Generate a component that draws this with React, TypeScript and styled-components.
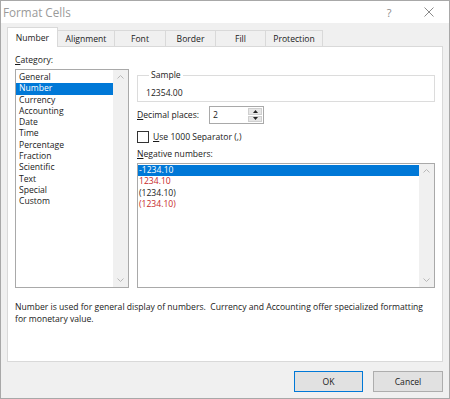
import React from "react";
import styled, { createGlobalStyle } from "styled-components";

const Global = createGlobalStyle`
  html, body { margin: 0; padding: 0; background: #f0f0f0; }
  body { font-family: "Open Sans", "Noto Sans", sans-serif; font-size: 8.6px; color: #1a1a1a; }
  * { box-sizing: border-box; }
`;

const Window = styled.div`
  width: 450px;
  height: 399px;
  border: 1px solid #a8a8a8;
  background: #f0f0f0;
  display: flex;
  flex-direction: column;
`;

const TitleBar = styled.div`
  height: 22px;
  background: #ffffff;
  display: flex;
  align-items: center;
  justify-content: space-between;
  padding-left: 2px;
`;

const Title = styled.div`
  font-size: 11.7px;
  color: #9a9a9a;
`;

const TitleButtons = styled.div`
  display: flex;
  align-items: center;
  height: 100%;
`;

const TitleButton = styled.div`
  width: 40px;
  height: 100%;
  display: flex;
  align-items: center;
  justify-content: center;
  color: #8a8a8a;
  font-size: 11px;
`;

const Body = styled.div`
  flex: 1;
  display: flex;
  flex-direction: column;
  padding: 5px 6px 0 6px;
`;

const TabRow = styled.div`
  display: flex;
  align-items: flex-end;
  height: 19px;
  position: relative;
  z-index: 1;
  margin-bottom: -1px;
`;

const Tab = styled.div<{ $active?: boolean; $w: number }>`
  width: ${(p) => p.$w}px;
  height: ${(p) => (p.$active ? 20 : 17)}px;
  display: flex;
  align-items: center;
  justify-content: center;
  background: ${(p) => (p.$active ? "#ffffff" : "#f0f0f0")};
  border: 1px solid #d9d9d9;
  border-bottom: ${(p) => (p.$active ? "none" : "1px solid #d9d9d9")};
  margin-left: ${(p) => (p.$active ? 0 : -1)}px;
  padding-top: ${(p) => (p.$active ? 1 : 1)}px;
  color: #1a1a1a;
  &:first-child { margin-left: 0; }
`;

const Panel = styled.div`
  height: 316px;
  background: #ffffff;
  border: 1px solid #d9d9d9;
  padding: 7px 6px 0 7px;
  display: flex;
  flex-direction: column;
`;

const Columns = styled.div`
  display: grid;
  grid-template-columns: 114px 298px;
  column-gap: 8px;
`;

const Column = styled.div`
  display: flex;
  flex-direction: column;
`;

const FieldLabel = styled.div<{ $mt?: number }>`
  line-height: 13px;
  height: 13px;
  margin-top: ${(p) => p.$mt ?? 0}px;
  margin-bottom: 2px;
  white-space: nowrap;
`;

const ListBox = styled.div<{ $h: number }>`
  height: ${(p) => p.$h}px;
  border: 1px solid #a9a9a9;
  display: flex;
  background: #fff;
`;

const ListItems = styled.div<{ $pt: number }>`
  flex: 1;
  padding-top: ${(p) => p.$pt}px;
`;

const ListItem = styled.div<{ $selected?: boolean; $red?: boolean; $tight?: boolean }>`
  height: 11.3px;
  line-height: 11.3px;
  padding-left: ${(p) => (p.$tight ? 1 : 3)}px;
  background: ${(p) => (p.$selected ? "#0078d7" : "transparent")};
  color: ${(p) => (p.$selected ? "#ffffff" : p.$red ? "#c62828" : "#1a1a1a")};
  white-space: nowrap;
`;

const ScrollBar = styled.div`
  width: 15px;
  background: #f0f0f0;
  display: flex;
  flex-direction: column;
  justify-content: space-between;
  align-items: center;
  padding: 5px 0 5px;
`;

const GroupBox = styled.fieldset`
  margin: 15px 0 0 0;
  padding: 6px 8px 2px 8px;
  border: 1px solid #dcdcdc;
  min-width: 0;
`;

const Legend = styled.legend`
  padding: 0 2px;
  margin-left: 3px;
  line-height: 12px;
  color: #1a1a1a;
`;

const SampleValue = styled.div`
  line-height: 12px;
`;

const Row = styled.div<{ $mt: number }>`
  display: flex;
  align-items: center;
  margin-top: ${(p) => p.$mt}px;
`;

const DecimalLabel = styled.div`
  width: 72px;
`;

const SpinBox = styled.div`
  width: 55px;
  height: 18px;
  border: 1px solid #a9a9a9;
  display: flex;
  background: #fff;
`;

const SpinValue = styled.div`
  flex: 1;
  padding-left: 3px;
  line-height: 16px;
`;

const SpinButtons = styled.div`
  width: 15px;
  display: flex;
  flex-direction: column;
  gap: 1px;
  padding: 1px 1px 1px 0;
`;

const SpinButton = styled.div`
  flex: 1;
  background: #e6e6e6;
  border: 1px solid #cfcfcf;
  display: flex;
  align-items: center;
  justify-content: center;
`;

const CheckBox = styled.div`
  width: 12px;
  height: 12px;
  border: 1px solid #333;
  background: #fff;
  margin-right: 4px;
`;

const Description = styled.div`
  margin-top: 14px;
  line-height: 11.5px;
  padding-right: 10px;
`;

const Footer = styled.div`
  display: flex;
  justify-content: flex-end;
  gap: 10px;
  margin-top: 9px;
`;

const Button = styled.div<{ $primary?: boolean }>`
  width: ${(p) => (p.$primary ? 69 : 70)}px;
  height: 21px;
  display: flex;
  align-items: center;
  justify-content: center;
  background: #e1e1e1;
  border: 1px solid ${(p) => (p.$primary ? "#0078d7" : "#adadad")};
`;

const Chevron = ({ up }: { up?: boolean }) => (
  <svg width="7" height="4" viewBox="0 0 7 4">
    <path
      d={up ? "M0.5 3.5 L3.5 0.5 L6.5 3.5" : "M0.5 0.5 L3.5 3.5 L6.5 0.5"}
      fill="none"
      stroke="#b8b8b8"
      strokeWidth="1"
    />
  </svg>
);

const Triangle = ({ up }: { up?: boolean }) => (
  <svg width="5" height="3" viewBox="0 0 5 3">
    <path d={up ? "M0 3 L2.5 0 L5 3 Z" : "M0 0 L2.5 3 L5 0 Z"} fill="#222" />
  </svg>
);

const tabs: [string, number][] = [
  ["Number", 51],
  ["Alignment", 58],
  ["Font", 52],
  ["Border", 51],
  ["Fill", 51],
  ["Protection", 58],
];

const categories = [
  "General",
  "Number",
  "Currency",
  "Accounting",
  "Date",
  "Time",
  "Percentage",
  "Fraction",
  "Scientific",
  "Text",
  "Special",
  "Custom",
];

const negatives: { text: string; red?: boolean }[] = [
  { text: "-1234.10" },
  { text: "1234.10", red: true },
  { text: "(1234.10)" },
  { text: "(1234.10)", red: true },
];

export default function App() {
  return (
    <>
      <Global />
      <Window>
        <TitleBar>
          <Title>Format Cells</Title>
          <TitleButtons>
            <TitleButton>?</TitleButton>
            <TitleButton>
              <svg width="10" height="10" viewBox="0 0 10 10">
                <path d="M0.5 0.5 L9.5 9.5 M9.5 0.5 L0.5 9.5" stroke="#8a8a8a" strokeWidth="1" />
              </svg>
            </TitleButton>
          </TitleButtons>
        </TitleBar>
        <Body>
          <TabRow>
            {tabs.map(([t, w], i) => (
              <Tab key={t} $w={w} $active={i === 0}>
                {t}
              </Tab>
            ))}
          </TabRow>
          <Panel>
            <Columns>
              <Column>
                <FieldLabel>
                  <u>C</u>ategory:
                </FieldLabel>
                <ListBox $h={219}>
                  <ListItems $pt={2}>
                    {categories.map((c) => (
                      <ListItem key={c} $selected={c === "Number"}>
                        {c}
                      </ListItem>
                    ))}
                  </ListItems>
                  <ScrollBar>
                    <Chevron up />
                    <Chevron />
                  </ScrollBar>
                </ListBox>
              </Column>
              <Column>
                <GroupBox>
                  <Legend>Sample</Legend>
                  <SampleValue>12354.00</SampleValue>
                </GroupBox>
                <Row $mt={4}>
                  <DecimalLabel>
                    <u>D</u>ecimal places:
                  </DecimalLabel>
                  <SpinBox>
                    <SpinValue>2</SpinValue>
                    <SpinButtons>
                      <SpinButton>
                        <Triangle up />
                      </SpinButton>
                      <SpinButton>
                        <Triangle />
                      </SpinButton>
                    </SpinButtons>
                  </SpinBox>
                </Row>
                <Row $mt={7}>
                  <CheckBox />
                  <span>
                    <u>U</u>se 1000 Separator (,)
                  </span>
                </Row>
                <FieldLabel $mt={5}>
                  <u>N</u>egative numbers:
                </FieldLabel>
                <ListBox $h={125}>
                  <ListItems $pt={1}>
                    {negatives.map((n, i) => (
                      <ListItem key={i} $tight $selected={i === 0} $red={n.red}>
                        {n.text}
                      </ListItem>
                    ))}
                  </ListItems>
                  <ScrollBar>
                    <Chevron up />
                    <Chevron />
                  </ScrollBar>
                </ListBox>
              </Column>
            </Columns>
            <Description>
              Number is used for general display of numbers.&nbsp; Currency and Accounting offer
              specialized formatting for monetary value.
            </Description>
          </Panel>
          <Footer>
            <Button $primary>OK</Button>
            <Button>Cancel</Button>
          </Footer>
        </Body>
      </Window>
    </>
  );
}
